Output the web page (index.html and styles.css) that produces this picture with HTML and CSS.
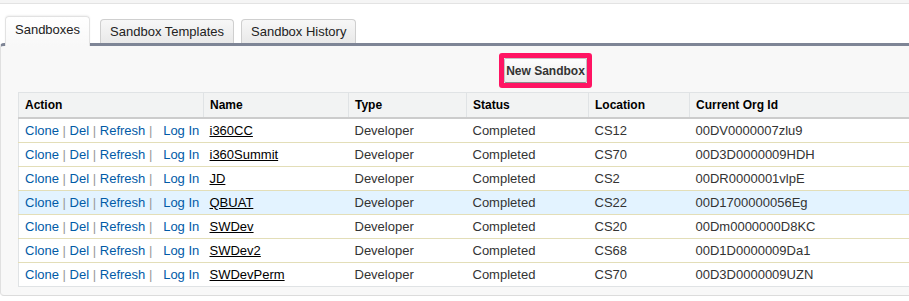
FILE: index.html
```html
<!DOCTYPE html>
<html lang="en">
<head>
  <meta charset="UTF-8">
  <title>Sandboxes</title>
  <link rel="stylesheet" href="styles.css">
</head>
<body>
  <div class="topbar"></div>

  <div class="tabs">
    <div class="tab active">Sandboxes</div>
    <div class="tab">Sandbox Templates</div>
    <div class="tab">Sandbox History</div>
  </div>

  <div class="panel">
    <div class="pb-header">
      <span class="callout"><button class="btn">New Sandbox</button></span>
    </div>

    <table class="list">
      <colgroup>
        <col class="c-action">
        <col class="c-name">
        <col class="c-type">
        <col class="c-status">
        <col class="c-location">
        <col>
      </colgroup>
      <thead>
        <tr>
          <th>Action</th>
          <th>Name</th>
          <th>Type</th>
          <th>Status</th>
          <th>Location</th>
          <th>Current Org Id</th>
        </tr>
      </thead>
      <tbody>
        <tr>
          <td class="actions"><a href="#">Clone</a>&nbsp;<span class="sep">|</span>&nbsp;<a href="#">Del</a>&nbsp;<span class="sep">|</span>&nbsp;<a href="#">Refresh</a>&nbsp;<span class="sep">|</span>&nbsp;&nbsp; <a href="#">Log In</a></td>
          <td><a class="name" href="#">i360CC</a></td>
          <td>Developer</td>
          <td>Completed</td>
          <td>CS12</td>
          <td>00DV0000007zlu9</td>
        </tr>
        <tr>
          <td class="actions"><a href="#">Clone</a>&nbsp;<span class="sep">|</span>&nbsp;<a href="#">Del</a>&nbsp;<span class="sep">|</span>&nbsp;<a href="#">Refresh</a>&nbsp;<span class="sep">|</span>&nbsp;&nbsp; <a href="#">Log In</a></td>
          <td><a class="name" href="#">i360Summit</a></td>
          <td>Developer</td>
          <td>Completed</td>
          <td>CS70</td>
          <td>00D3D0000009HDH</td>
        </tr>
        <tr>
          <td class="actions"><a href="#">Clone</a>&nbsp;<span class="sep">|</span>&nbsp;<a href="#">Del</a>&nbsp;<span class="sep">|</span>&nbsp;<a href="#">Refresh</a>&nbsp;<span class="sep">|</span>&nbsp;&nbsp; <a href="#">Log In</a></td>
          <td><a class="name" href="#">JD</a></td>
          <td>Developer</td>
          <td>Completed</td>
          <td>CS2</td>
          <td>00DR0000001vlpE</td>
        </tr>
        <tr class="highlight">
          <td class="actions"><a href="#">Clone</a>&nbsp;<span class="sep">|</span>&nbsp;<a href="#">Del</a>&nbsp;<span class="sep">|</span>&nbsp;<a href="#">Refresh</a>&nbsp;<span class="sep">|</span>&nbsp;&nbsp; <a href="#">Log In</a></td>
          <td><a class="name" href="#">QBUAT</a></td>
          <td>Developer</td>
          <td>Completed</td>
          <td>CS22</td>
          <td>00D1700000056Eg</td>
        </tr>
        <tr>
          <td class="actions"><a href="#">Clone</a>&nbsp;<span class="sep">|</span>&nbsp;<a href="#">Del</a>&nbsp;<span class="sep">|</span>&nbsp;<a href="#">Refresh</a>&nbsp;<span class="sep">|</span>&nbsp;&nbsp; <a href="#">Log In</a></td>
          <td><a class="name" href="#">SWDev</a></td>
          <td>Developer</td>
          <td>Completed</td>
          <td>CS20</td>
          <td>00Dm0000000D8KC</td>
        </tr>
        <tr>
          <td class="actions"><a href="#">Clone</a>&nbsp;<span class="sep">|</span>&nbsp;<a href="#">Del</a>&nbsp;<span class="sep">|</span>&nbsp;<a href="#">Refresh</a>&nbsp;<span class="sep">|</span>&nbsp;&nbsp; <a href="#">Log In</a></td>
          <td><a class="name" href="#">SWDev2</a></td>
          <td>Developer</td>
          <td>Completed</td>
          <td>CS68</td>
          <td>00D1D0000009Da1</td>
        </tr>
        <tr>
          <td class="actions"><a href="#">Clone</a>&nbsp;<span class="sep">|</span>&nbsp;<a href="#">Del</a>&nbsp;<span class="sep">|</span>&nbsp;<a href="#">Refresh</a>&nbsp;<span class="sep">|</span>&nbsp;&nbsp; <a href="#">Log In</a></td>
          <td><a class="name" href="#">SWDevPerm</a></td>
          <td>Developer</td>
          <td>Completed</td>
          <td>CS70</td>
          <td>00D3D0000009UZN</td>
        </tr>
      </tbody>
    </table>
  </div>
</body>
</html>
```

FILE: styles.css
```css
body {
  margin: 0;
  font-family: 'Liberation Sans', Arial, sans-serif;
  font-size: 13px;
  color: #333;
  background: #fff;
  overflow: hidden;
}

.topbar {
  height: 3px;
  background-color: #f5f5f5;
  border-bottom: 1px solid #e3e3e3;
}

.tabs {
  display: flex;
  align-items: flex-end;
  height: 27px;
  margin-top: 12px;
  padding-left: 5px;
}

.tab {
  box-sizing: border-box;
  height: 24px;
  padding: 4px 9px 0;
  margin-left: 7px;
  line-height: 15px;
  color: #222;
  background: linear-gradient(#f7f7f7, #e9e9e9);
  border: 1px solid #cfcfcf;
  border-bottom: none;
  border-radius: 4px 4px 0 0;
}

.tab.active {
  position: relative;
  z-index: 1;
  height: 30px;
  margin-left: 0;
  margin-right: 3px;
  margin-bottom: -3px;
  padding: 5px 9px 0;
  background: linear-gradient(#fff, #f8f8f8);
  border-color: #e2e2e2;
  box-shadow: 0 -1px 2px rgba(0, 0, 0, 0.06);
}

.panel {
  width: 980px;
  padding: 7px 0 8px 17px;
  background-color: #f8f8f8;
  border-top: 3px solid #7e8596;
  border-left: 1px solid #e0e0e0;
  border-bottom: 1px solid #dcdcdc;
  border-radius: 4px 0 0 4px;
}

.pb-header {
  display: flex;
  padding-left: 481px;
  margin-bottom: 4px;
}

.callout {
  display: inline-flex;
  border: 5px solid #ff1463;
  border-radius: 3px;
}

.btn {
  width: 83px;
  height: 25px;
  padding: 0;
  white-space: nowrap;
  font-family: 'Liberation Sans', Arial, sans-serif;
  font-size: 12px;
  font-weight: bold;
  color: #333;
  background: linear-gradient(#fdfdfd, #ececec);
  border: 1px solid #c4c4c4;
  border-bottom-color: #8c8c8c;
  border-radius: 2px;
}

.list {
  width: 930px;
  table-layout: fixed;
  border-collapse: collapse;
  background-color: #fff;
  border-top: 1px solid #e0e3e5;
  border-left: 1px solid #e0e3e5;
  border-bottom: 1px solid #e0e3e5;
}

.c-action { width: 185px; }
.c-name { width: 145px; }
.c-type { width: 118px; }
.c-status { width: 122px; }
.c-location { width: 101px; }

.list th {
  padding: 5px 6px 4px;
  line-height: 15px;
  font-size: 12px;
  font-weight: bold;
  text-align: left;
  color: #000;
  background-color: #f2f3f3;
  border-left: 1px solid #e0e3e5;
  border-bottom: 2px solid #cccccc;
}

.list td {
  padding: 4px 6px;
  line-height: 15px;
  white-space: nowrap;
  border-bottom: 1px solid #e3deb8;
}

.list tr:last-child td {
  border-bottom-color: #e0e3e5;
}

.list tr.highlight td {
  background-color: #e3f3ff;
}

.actions a {
  color: #015ba7;
  text-decoration: none;
}

.sep {
  color: #999;
}

a.name {
  color: #000;
  text-decoration: underline;
}
```
